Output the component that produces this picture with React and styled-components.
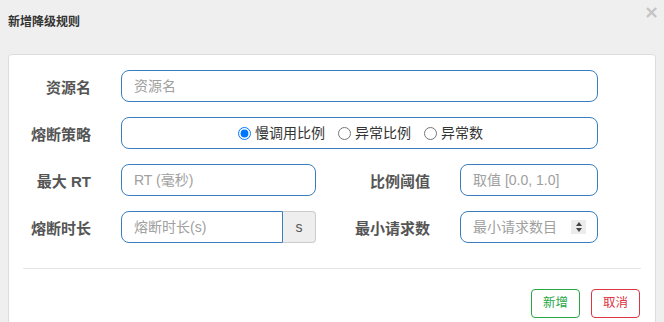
import React from "react";
import styled, { createGlobalStyle } from "styled-components";

const Global = createGlobalStyle`
  html, body { margin: 0; padding: 0; background: #efefef; }
  body { font-family: "Liberation Sans", "Noto Sans CJK SC", sans-serif; color: #333; }
  * { box-sizing: border-box; }
`;

const Page = styled.div`
  width: 664px;
  height: 322px;
  overflow: hidden;
  background: #efefef;
`;

const Header = styled.div`
  height: 54px;
  display: flex;
  justify-content: space-between;
  padding: 0 5px 10px 8px;
`;

const Title = styled.h4`
  margin: 0;
  align-self: center;
  font-size: 12px;
  font-weight: bold;
  color: #333;
  line-height: 20px;
`;

const Close = styled.span`
  align-self: flex-start;
  margin-top: 2px;
  font-family: "DejaVu Sans", sans-serif;
  font-size: 18px;
  line-height: 20px;
  font-weight: bold;
  color: #c4c4c4;
`;

const Panel = styled.div`
  margin: 0 8px;
  background: #fff;
  border: 1px solid #dcdcdc;
  border-radius: 4px;
  padding-top: 15px;
  height: 300px;
`;

const Form = styled.div`
  display: grid;
  grid-template-columns: 112px 195px 144px 138px;
  grid-auto-rows: 32px;
  row-gap: 15px;
`;

const Label = styled.label`
  display: flex;
  align-items: center;
  justify-content: flex-end;
  padding-right: 30px;
  font-size: 15px;
  font-weight: bold;
  color: #555;
  white-space: nowrap;
`;

const Field = styled.div`
  grid-column: ${(p) => (p.$wide ? "2 / 5" : "auto")};
  position: relative;
  display: flex;
  height: 32px;
`;

const Input = styled.input`
  flex: 1;
  min-width: 0;
  height: 32px;
  border: 1px solid #3b7ec0;
  border-radius: ${(p) => (p.$grouped ? "8px 0 0 8px" : "8px")};
  padding: 0 12px;
  font-family: "Liberation Sans", "Noto Sans CJK SC", sans-serif;
  font-size: 14px;
  color: #333;
  background: #fff;
  outline: none;
  &::placeholder { color: #a0a0a0; }
  &::-webkit-inner-spin-button, &::-webkit-outer-spin-button { -webkit-appearance: none; margin: 0; }
`;

const Addon = styled.span`
  width: 33px;
  display: flex;
  align-items: center;
  justify-content: center;
  background: #eee;
  border: 1px solid #ccc;
  border-left: none;
  border-radius: 0 4px 4px 0;
  font-size: 14px;
  color: #555;
`;

const RadioBox = styled.div`
  flex: 1;
  display: flex;
  align-items: center;
  justify-content: center;
  gap: 13px;
  border: 1px solid #3b7ec0;
  border-radius: 8px;
  padding-left: 2px;
`;

const RadioItem = styled.label`
  display: flex;
  align-items: center;
  gap: 4px;
  font-size: 14px;
  color: #333;
  line-height: 20px;
  input { margin: 0; width: 13px; height: 13px; }
`;

const Spinner = styled.span`
  position: absolute;
  right: 12px;
  top: 9px;
  width: 15px;
  height: 14px;
  background: #ececec;
  display: flex;
  flex-direction: column;
  align-items: center;
  justify-content: center;
  gap: 2px;
`;

const Tri = styled.span`
  width: 0;
  height: 0;
  border-left: 3.5px solid transparent;
  border-right: 3.5px solid transparent;
  ${(p) => (p.$up ? "border-bottom: 4px solid #444;" : "border-top: 4px solid #444;")}
`;

const Divider = styled.hr`
  margin: 25px 14px 0;
  border: none;
  border-top: 1px solid #e5e5e5;
`;

const Footer = styled.div`
  display: flex;
  justify-content: flex-end;
  gap: 11px;
  padding: 20px 15px 0;
`;

const Btn = styled.button`
  height: 29px;
  width: 49px;
  padding: 0;
  background: #fff;
  border: 1px solid ${(p) => p.$color};
  color: ${(p) => p.$color};
  border-radius: 4px;
  font-family: "Liberation Sans", "Noto Sans CJK SC", sans-serif;
  font-size: 12.5px;
  line-height: 1;
`;

export default function App() {
  return (
    <Page>
      <Global />
      <Header>
        <Title>新增降级规则</Title>
        <Close>×</Close>
      </Header>
      <Panel>
        <Form>
          <Label>资源名</Label>
          <Field $wide>
            <Input placeholder="资源名" />
          </Field>

          <Label>熔断策略</Label>
          <Field $wide>
            <RadioBox>
              <RadioItem><input type="radio" name="g" defaultChecked />慢调用比例</RadioItem>
              <RadioItem><input type="radio" name="g" />异常比例</RadioItem>
              <RadioItem><input type="radio" name="g" />异常数</RadioItem>
            </RadioBox>
          </Field>

          <Label>最大 RT</Label>
          <Field>
            <Input placeholder="RT (毫秒)" />
          </Field>
          <Label>比例阈值</Label>
          <Field>
            <Input placeholder="取值 [0.0, 1.0]" />
          </Field>

          <Label>熔断时长</Label>
          <Field>
            <Input $grouped placeholder="熔断时长(s)" />
            <Addon>s</Addon>
          </Field>
          <Label>最小请求数</Label>
          <Field>
            <Input type="number" placeholder="最小请求数目" />
            <Spinner><Tri $up /><Tri /></Spinner>
          </Field>
        </Form>
        <Divider />
        <Footer>
          <Btn $color="#28a745">新增</Btn>
          <Btn $color="#dc3545">取消</Btn>
        </Footer>
      </Panel>
    </Page>
  );
}
